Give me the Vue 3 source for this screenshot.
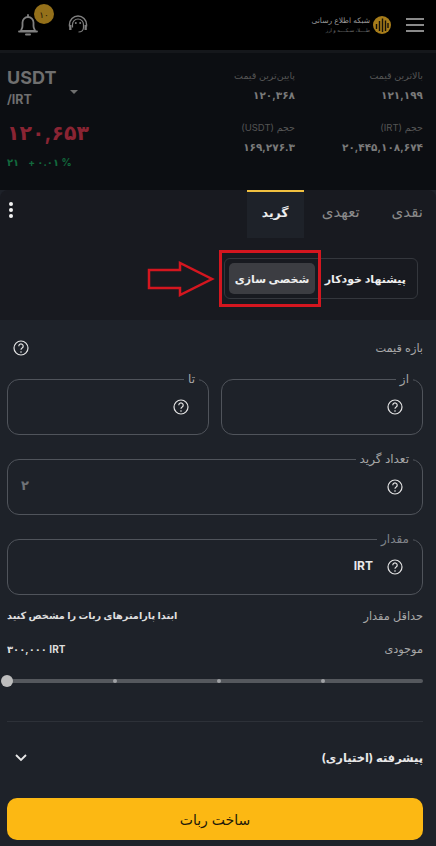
<script setup>
const stats = [
  { label: 'بالاترین قیمت', value: '۱۲۱,۱۹۹' },
  { label: 'پایین‌ترین قیمت', value: '۱۲۰,۳۶۸' },
  { label: 'حجم (IRT)', value: '۲۰,۴۴۵,۱۰۸,۶۷۴' },
  { label: 'حجم (USDT)', value: '۱۶۹,۲۷۶.۳' }
]
</script>

<template>
  <div class="app" dir="rtl">
    <header class="topbar">
      <div class="brand">
        <div class="burger"><i></i><i></i><i></i></div>
        <svg class="logo" width="18" height="18" viewBox="0 0 18 18">
          <circle cx="9" cy="9" r="9" fill="#a67c1a" />
          <path d="M3.500 13V8M6.500 15V5M9.500 16V2.500M12.500 15V4.500M15 12V7" stroke="#14110a" stroke-width="1.400" fill="none" />
        </svg>
        <div class="brand-text">
          <span class="brand-main">شبکه اطلاع رسانی</span>
          <span class="brand-sub">طــــلا، سـکــــه و ارز</span>
        </div>
      </div>
      <div class="top-actions">
        <svg class="bell" width="20" height="22" viewBox="0 0 20 22" fill="none" stroke="#808080" stroke-width="1.800">
          <path d="M3 17c0-1.500 1.500-2.500 1.500-5V8.500a5.500 5.500 0 0 1 11 0V12c0 2.500 1.500 3.500 1.500 5z" stroke-linejoin="round" />
          <path d="M1 17.500h18M10 1v2" stroke-linecap="round" />
          <path d="M8 20.500h4" stroke-width="2" stroke-linecap="round" />
        </svg>
        <span class="badge">۱۰</span>
        <svg class="headset" width="20" height="20" viewBox="0 0 20 20" fill="none" stroke="#808080">
          <path d="M1.500 11.500V9.500a8.500 8.500 0 0 1 17 0v2" stroke-width="1.500" />
          <path d="M4.500 12.500V9.500a5.500 5.500 0 0 1 11 0v3c0 2.500-2 4.500-5 4.500" stroke-width="1.200" />
          <path d="M1.200 10h2.300v5H1.200zM16.500 10h2.300v5h-2.300z" fill="#808080" stroke="none" />
          <circle cx="7.800" cy="8" r="1" fill="#808080" stroke="none" />
          <circle cx="12.200" cy="8" r="1" fill="#808080" stroke="none" />
        </svg>
      </div>
    </header>

    <section class="market">
      <div class="stats">
        <div v-for="s in stats" :key="s.label" class="stat">
          <span class="stat-label">{{ s.label }}</span>
          <span class="stat-value">{{ s.value }}</span>
        </div>
      </div>
      <div class="pair" dir="ltr">
        <div class="pair-head">
          <div class="pair-name">
            <span class="base">USDT</span>
            <span class="quote">/IRT</span>
          </div>
          <span class="caret"></span>
        </div>
        <div class="last">۱۲۰,۶۵۳</div>
        <div class="change"><span>۲۱</span><span>+ ۰.۰۱ %</span></div>
      </div>
    </section>

    <section class="panel">
      <div class="tabs">
        <span class="tab">نقدی</span>
        <span class="tab">تعهدی</span>
        <span class="tab active">گرید</span>
        <div class="dots"><i></i><i></i><i></i></div>
      </div>
      <div class="segment-row">
        <div class="segment">
          <span class="seg-item">پیشنهاد خودکار</span>
          <span class="seg-item selected">شخصی سازی</span>
        </div>
        <div class="red-box"></div>
        <svg class="arrow" width="68" height="36" viewBox="0 0 68 36" fill="none" stroke="#d4161f" stroke-width="2.500">
          <path d="M2 9h31V2l32 16-32 16v-7H2z" />
        </svg>
      </div>
    </section>

    <main class="form">
      <div class="range-head">
        <span class="muted">بازه قیمت</span>
        <svg class="help" viewBox="0 0 16 16"><circle cx="8" cy="8" r="7" /><path d="M5.800 6.200a2.200 2.200 0 1 1 3.400 1.800c-.8.500-1.200 1-1.200 1.800" /><circle class="dot" cx="8" cy="12" r=".8" /></svg>
      </div>

      <div class="two">
        <fieldset class="field">
          <legend>از</legend>
          <svg class="help" viewBox="0 0 16 16"><circle cx="8" cy="8" r="7" /><path d="M5.800 6.200a2.200 2.200 0 1 1 3.400 1.800c-.8.500-1.200 1-1.200 1.800" /><circle class="dot" cx="8" cy="12" r=".8" /></svg>
        </fieldset>
        <fieldset class="field">
          <legend>تا</legend>
          <svg class="help" viewBox="0 0 16 16"><circle cx="8" cy="8" r="7" /><path d="M5.800 6.200a2.200 2.200 0 1 1 3.400 1.800c-.8.500-1.200 1-1.200 1.800" /><circle class="dot" cx="8" cy="12" r=".8" /></svg>
        </fieldset>
      </div>

      <div class="one">
        <fieldset class="field">
          <legend>تعداد گرید</legend>
          <svg class="help" viewBox="0 0 16 16"><circle cx="8" cy="8" r="7" /><path d="M5.800 6.200a2.200 2.200 0 1 1 3.400 1.800c-.8.500-1.200 1-1.200 1.800" /><circle class="dot" cx="8" cy="12" r=".8" /></svg>
          <span class="placeholder">۲</span>
        </fieldset>
      </div>

      <div class="one">
        <fieldset class="field">
          <legend class="dim">مقدار</legend>
          <svg class="help" viewBox="0 0 16 16"><circle cx="8" cy="8" r="7" /><path d="M5.800 6.200a2.200 2.200 0 1 1 3.400 1.800c-.8.500-1.200 1-1.200 1.800" /><circle class="dot" cx="8" cy="12" r=".8" /></svg>
          <span class="unit">IRT</span>
        </fieldset>
      </div>

      <div class="info first">
        <span class="muted">حداقل مقدار</span>
        <strong>ابتدا پارامترهای ربات را مشخص کنید</strong>
      </div>
      <div class="info">
        <span class="muted">موجودی</span>
        <strong class="balance" dir="ltr">۳۰۰,۰۰۰ IRT</strong>
      </div>

      <div class="slider" dir="ltr">
        <span class="thumb"></span>
        <span class="tick"></span><span class="tick"></span><span class="tick"></span>
      </div>

      <div class="divider"></div>

      <div class="advanced">
        <span>پیشرفته (اختیاری)</span>
        <svg width="14" height="10" viewBox="0 0 14 10" fill="none" stroke="#e8e8e8" stroke-width="1.800"><path d="M2 2l5 5 5-5" /></svg>
      </div>

      <button class="submit" type="button">ساخت ربات</button>
    </main>
  </div>
</template>

<style>
html, body { margin: 0; background: #1e2229; }
</style>

<style scoped>
.app {
  width: 436px;
  height: 846px;
  overflow: hidden;
  background: #1e2229;
  color: #e8e8e8;
  font-family: Inter, "DejaVu Sans", sans-serif;
  display: flex;
  flex-direction: column;
}
.topbar {
  height: 50px;
  flex: none;
  background: #000;
  border-bottom: 3px solid #15171b;
  display: flex;
  justify-content: space-between;
  align-items: center;
  padding: 0 12px 0 18px;
}
.brand { display: flex; align-items: center; }
.burger { width: 18px; display: flex; flex-direction: column; gap: 4px; margin-left: 15px; }
.burger i { display: block; height: 2px; background: #8a8a8a; }
.logo { margin-left: 3px; }
.brand-text { display: flex; flex-direction: column; align-items: flex-start; line-height: 1; width: 60px; white-space: nowrap; }
.brand-main { font-size: 7.500px; color: #999; }
.brand-sub { font-size: 5px; color: #6c6c6c; margin-top: 3px; }
.top-actions { display: flex; align-items: center; position: relative; direction: ltr; gap: 30px; }
.badge {
  position: absolute;
  left: 16px;
  top: -10px;
  width: 20px;
  height: 20px;
  border-radius: 50%;
  background: #94701a;
  color: #1a1406;
  font-size: 9px;
  display: flex;
  align-items: center;
  justify-content: center;
}
.market {
  height: 137px;
  flex: none;
  box-sizing: border-box;
  background: #0c0e12;
  padding: 15px 13px 0 7px;
  display: flex;
  justify-content: space-between;
}
.stats {
  display: grid;
  grid-template-columns: 128px 128px;
  grid-auto-rows: 52px;
  width: 256px;
  padding-top: 1px;
}
.stat { display: flex; flex-direction: column; gap: 6px; align-items: flex-start; }
.stat-label { font-size: 9.500px; color: #555; line-height: 14px; white-space: nowrap; }
.stat-value { font-size: 10.500px; font-weight: 700; color: #7a7a7a; line-height: 14px; white-space: nowrap; }
.pair { width: 100px; display: flex; flex-direction: column; }
.pair-head { display: flex; align-items: center; }
.pair-name { display: flex; flex-direction: column; width: 63px; }
.base { font-size: 18px; font-weight: 700; color: #6f6f6f; line-height: 20px; }
.quote { font-size: 12.500px; font-weight: 700; color: #6f6f6f; line-height: 18px; margin-top: 3px; }
.caret { width: 0; height: 0; border: 4px solid transparent; border-top: 4px solid #6f6f6f; border-bottom: 0; margin-top: 7px; }
.last { font-size: 20.500px; letter-spacing: -1px; font-weight: 700; color: #8a2433; line-height: 30px; margin-top: 9px; white-space: nowrap; }
.change { display: flex; gap: 9px; font-size: 10px; color: #12693d; font-weight: 700; line-height: 14px; margin-top: 7px; }
.panel {
  height: 130px;
  flex: none;
  box-sizing: border-box;
  background: #181a20;
  border-radius: 8px 8px 0 0;
  display: flex;
  flex-direction: column;
}
.tabs { display: flex; align-items: stretch; height: 48px; padding-right: 13px; position: relative; }
.tab { font-size: 15px; color: #8a8a8a; display: flex; align-items: center; padding-bottom: 6px; }
.tab:nth-child(2) { margin-right: 32px; }
.tab.active {
  margin-right: 18px;
  width: 57px;
  justify-content: center;
  border-top: 2px solid #f0c040;
  background: #1e2229;
  color: #eee;
  font-size: 12.500px;
  font-weight: 700;
  box-sizing: border-box;
}
.dots { position: absolute; left: 9px; top: 12px; display: flex; flex-direction: column; gap: 2px; }
.dots i { width: 4px; height: 4px; border-radius: 50%; background: #f2f2f2; display: block; }
.segment-row { position: relative; padding: 20px 18px 0 0; }
.segment {
  width: 194px;
  height: 41px;
  box-sizing: border-box;
  border: 1px solid #34373d;
  border-radius: 6px;
  display: flex;
  align-items: center;
  padding: 0 4px;
  justify-content: space-between;
}
.seg-item { font-size: 11px; font-weight: 700; color: #eee; white-space: nowrap; padding-right: 7px; }
.seg-item.selected {
  width: 86px;
  height: 31px;
  background: #3c3d42;
  border-radius: 5px;
  display: flex;
  align-items: center;
  justify-content: center;
  padding: 0;
}
.red-box {
  position: absolute;
  left: 219px;
  top: 12px;
  width: 102px;
  height: 57px;
  box-sizing: border-box;
  border: 3px solid #d4161f;
}
.arrow { position: absolute; left: 147px; top: 23px; }
.form { padding: 0 13px 0 7px; flex: 1; display: flex; flex-direction: column; }
.range-head {
  height: 52px;
  flex: none;
  display: flex;
  align-items: center;
  justify-content: space-between;
  padding: 4px 0 0 6px;
  box-sizing: border-box;
}
.muted { font-size: 11.300px; color: #a8a8a8; }
.help { width: 16px; height: 16px; fill: none; stroke: #e4e4e4; stroke-width: 1.200; flex: none; }
.help .dot { fill: #e4e4e4; stroke: none; }
.two { display: grid; grid-template-columns: 202px 202px; gap: 12px; justify-content: space-between; flex: none; }
.one { display: grid; margin-top: 17px; flex: none; }
.field {
  margin: 0;
  min-width: 0;
  height: 63px;
  box-sizing: border-box;
  border: 1px solid #50545b;
  border-radius: 12px;
  padding: 0 9px 6px;
  display: flex;
  align-items: center;
  justify-content: flex-start;
  position: relative;
}
.field .help { margin-right: 10px; }
.field legend { font-size: 12px; color: #a6a6a6; padding: 0 4px; line-height: 14px; }
.field legend.dim { color: #80848a; }
.placeholder { position: absolute; left: 13px; top: 11px; font-size: 13px; color: #6f7277; font-weight: 700; }
.unit { font-size: 12px; font-weight: 700; color: #e8e8e8; margin-right: 14px; margin-top: -3px; }
.info { display: flex; justify-content: space-between; align-items: center; height: 33px; flex: none; }
.info.first { margin-top: 4px; }
.info strong { font-size: 9.750px; color: #dedede; font-weight: 700; white-space: nowrap; }
.info strong.balance { font-size: 10px; }
.slider {
  margin-top: 14px;
  height: 4px;
  background: #55585d;
  border-radius: 2px;
  position: relative;
  display: flex;
  align-items: center;
  justify-content: flex-start;
  padding-left: 106px;
  gap: 100px;
  flex: none;
}
.thumb { position: absolute; left: -6px; top: -4px; width: 12px; height: 12px; border-radius: 50%; background: #bdbdbd; }
.tick { width: 4px; height: 4px; border-radius: 50%; background: #9fa1a4; }
.divider { height: 1px; background: #2d3138; margin-top: 38px; flex: none; }
.advanced {
  height: 72px;
  flex: none;
  display: flex;
  align-items: center;
  justify-content: space-between;
  padding-left: 7px;
  font-size: 11.500px;
  font-weight: 700;
  color: #e8e8e8;
  box-sizing: border-box;
}
.submit {
  height: 42px;
  flex: none;
  margin-top: 4px;
  border: 0;
  border-radius: 10px;
  background: #fcb813;
  color: #20180a;
  font: inherit;
  font-size: 14px;
}
</style>
